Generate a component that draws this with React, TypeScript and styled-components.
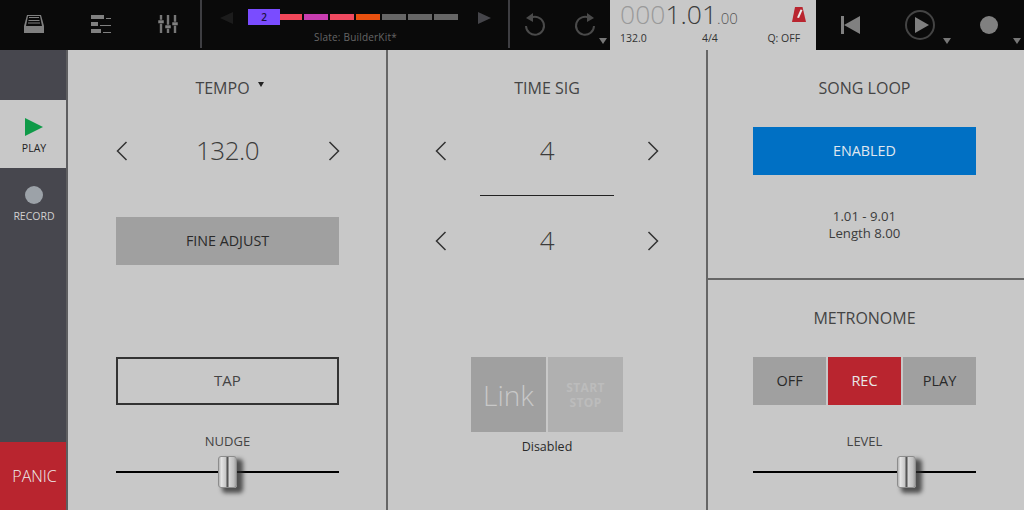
import React from "react";
import styled, { createGlobalStyle } from "styled-components";

const GlobalStyle = createGlobalStyle`
  html, body {
    margin: 0;
    padding: 0;
    background: #c8c8c8;
  }
  * {
    box-sizing: border-box;
  }
`;

const Page = styled.div`
  width: 1024px;
  height: 510px;
  overflow: hidden;
  display: flex;
  flex-direction: column;
  font-family: "Open Sans", "Liberation Sans", sans-serif;
  color: #3c3c3c;
`;

const TopBar = styled.header`
  height: 50px;
  display: flex;
  background: #0a0a0a;
  flex: none;
`;

const IconGroup = styled.div<{ $width: number }>`
  position: relative;
  width: ${p => p.$width}px;
  display: flex;
  align-items: center;
  justify-content: space-around;
  flex: none;
`;

const MainIcons = styled(IconGroup)`
  justify-content: flex-start;
  gap: 47px;
  padding-left: 24px;
`;

const VDivider = styled.div`
  width: 2px;
  height: 48px;
  background: #3e3e42;
  flex: none;
`;

const Sequencer = styled.div`
  position: relative;
  width: 306px;
  flex: none;
  display: flex;
  flex-direction: column;
  align-items: center;
`;

const SeqRow = styled.div`
  height: 30px;
  display: flex;
  align-items: flex-start;
  padding-top: 9px;
  align-self: flex-start;
  margin-left: 18px;
`;

const SeqArrow = styled.div<{ $color: string; $left?: boolean }>`
  width: 0;
  height: 0;
  margin-top: 3px;
  border-top: 6.5px solid transparent;
  border-bottom: 6.5px solid transparent;
  ${p =>
    p.$left
      ? `border-right: 13px solid ${p.$color}; margin-right: 15px;`
      : `border-left: 13px solid ${p.$color}; margin-left: 20px;`}
`;

const SeqBadge = styled.div`
  width: 32px;
  height: 16px;
  background: #7a4cff;
  color: #1a1040;
  font-size: 10px;
  font-weight: 600;
  line-height: 16px;
  text-align: center;
`;

const Segments = styled.div`
  display: flex;
  gap: 2px;
  margin-top: 5px;
`;

const Segment = styled.div<{ $color: string; $first?: boolean }>`
  width: ${p => (p.$first ? 22 : 24)}px;
  height: 6px;
  background: ${p => p.$color};
`;

const SlateName = styled.div`
  font-size: 10px;
  line-height: 14px;
  color: #666;
  letter-spacing: 0.2px;
  margin-left: 1px;
`;

const Counter = styled.div`
  position: relative;
  width: 206px;
  flex: none;
  background: #c8c8c8;
  padding: 0 10px;
  display: flex;
  flex-direction: column;
`;

const CounterValue = styled.div`
  font-size: 26.5px;
  font-weight: 300;
  line-height: 29px;
  height: 31px;
  white-space: nowrap;
  color: #3c3c3c;
`;

const CounterDim = styled.span`
  color: #9a9a9a;
`;

const CounterSmall = styled.span`
  font-size: 15px;
  color: #555;
`;

const CounterInfo = styled.div`
  display: flex;
  font-size: 10.5px;
  line-height: 14px;
  color: #333;
`;

const InfoItem = styled.span<{ $width: number }>`
  width: ${p => p.$width}px;
  white-space: nowrap;
`;

const MetronomeIcon = styled.svg`
  position: absolute;
  left: 182px;
  top: 7px;
`;

const Caret = styled.div`
  position: absolute;
  bottom: 6px;
  right: 3px;
  width: 0;
  height: 0;
  border-left: 4px solid transparent;
  border-right: 4px solid transparent;
  border-top: 6px solid #777;
`;

const Transport = styled.div`
  flex: 1;
  display: flex;
  align-items: center;
`;

const TransportSlot = styled.div<{ $width: number }>`
  position: relative;
  height: 50px;
  width: ${p => p.$width}px;
  display: flex;
  align-items: center;
  justify-content: center;
`;

const PlayCircle = styled.div`
  width: 30px;
  height: 30px;
  border: 2px solid #444;
  border-radius: 50%;
  display: flex;
  align-items: center;
  justify-content: center;
  padding-left: 3px;
`;

const PlayTriangle = styled.div`
  width: 0;
  height: 0;
  border-top: 8px solid transparent;
  border-bottom: 8px solid transparent;
  border-left: 14px solid #808080;
`;

const RecordDot = styled.div`
  width: 18px;
  height: 18px;
  border-radius: 50%;
  background: #808080;
`;

const Body = styled.main`
  flex: 1;
  display: flex;
  min-height: 0;
`;

const Sidebar = styled.nav`
  width: 68px;
  flex: none;
  display: flex;
  flex-direction: column;
  background: #47474e;
  border-right: 2px solid #5e5e60;
  padding-top: 50px;
`;

const SideTab = styled.div<{ $active?: boolean }>`
  height: 68px;
  width: 66px;
  display: flex;
  flex-direction: column;
  align-items: center;
  padding: 17px 0 0 2px;
  background: ${p => (p.$active ? "#c8c8c8" : "transparent")};
  color: ${p => (p.$active ? "#222" : "#d0d0d0")};
  font-size: 10.5px;
  line-height: 14px;
`;

const SideIcon = styled.div`
  height: 20px;
  margin-bottom: 4px;
  display: flex;
  align-items: center;
`;

const GreenPlay = styled.div`
  width: 0;
  height: 0;
  border-top: 9px solid transparent;
  border-bottom: 9px solid transparent;
  border-left: 18px solid #0f9a48;
`;

const GreyDot = styled.div`
  width: 18px;
  height: 18px;
  border-radius: 50%;
  background: #9ca2a8;
`;

const PanicButton = styled.div`
  margin-top: auto;
  height: 68px;
  width: 66px;
  background: #b9252f;
  color: #ededed;
  font-size: 16px;
  font-weight: 300;
  display: flex;
  align-items: center;
  justify-content: center;
  padding-left: 3px;
`;

const Columns = styled.div`
  flex: 1;
  display: grid;
  grid-template-columns: 318px 318px 316px;
`;

const Panel = styled.section<{ $divider?: boolean }>`
  display: flex;
  flex-direction: column;
  align-items: center;
  padding: 28px 47px 0 48px;
  ${p => (p.$divider ? "border-right: 2px solid #666;" : "")}
  width: ${p => (p.$divider ? "320px" : "auto")};
`;

const MiddlePanel = styled(Panel)`
  padding: 28px 48px 0 48px;
  margin-left: 2px;
`;

const RightColumn = styled.div`
  margin-left: 4px;
  display: grid;
  grid-template-rows: 230px 1fr;
`;

const RightPanel = styled.section<{ $top?: boolean }>`
  display: flex;
  flex-direction: column;
  align-items: center;
  padding: 28px 48px 0 45px;
  ${p => (p.$top ? "border-bottom: 2px solid #666;" : "")}
`;

const Title = styled.div<{ $shift?: number }>`
  position: relative;
  height: 20px;
  font-size: 16px;
  line-height: 20px;
  font-weight: 400;
  color: #444;
  text-align: center;
  margin-right: ${p => p.$shift ?? 0}px;
`;

const TitleCaret = styled.span`
  position: absolute;
  left: calc(100% + 8px);
  top: 4px;
  width: 0;
  height: 0;
  border-left: 3px solid transparent;
  border-right: 3px solid transparent;
  border-top: 5px solid #222;
`;

const Stepper = styled.div<{ $top: number }>`
  width: 224px;
  height: 40px;
  margin-top: ${p => p.$top}px;
  display: flex;
  align-items: center;
  justify-content: space-between;
  flex: none;
`;

const StepValue = styled.div`
  font-size: 26px;
  font-weight: 300;
  line-height: 38px;
  padding-bottom: 2px;
  color: #3c3c3c;
  letter-spacing: -0.5px;
`;

const Rule = styled.div`
  width: 134px;
  height: 1px;
  background: #222;
  margin-top: 24px;
  flex: none;
`;

const WideButton = styled.div<{ $top: number; $variant: "fill" | "outline" | "blue" }>`
  width: 223px;
  height: 48px;
  margin-top: ${p => p.$top}px;
  padding-bottom: 2px;
  display: flex;
  align-items: center;
  justify-content: center;
  font-size: ${p => (p.$variant === "outline" ? 15 : 14.3)}px;
  flex: none;
  background: ${p =>
    p.$variant === "fill" ? "#a0a0a0" : p.$variant === "blue" ? "#0070c4" : "transparent"};
  border: ${p => (p.$variant === "outline" ? "2px solid #333" : "none")};
  color: ${p => (p.$variant === "blue" ? "#e0e8f0" : p.$variant === "outline" ? "#444" : "#2a2a2a")};
`;

const SliderLabel = styled.div<{ $top: number }>`
  height: 20px;
  margin-top: ${p => p.$top}px;
  font-size: 13px;
  line-height: 20px;
  color: #444;
`;

const Slider = styled.div`
  position: relative;
  width: 223px;
  height: 32px;
  margin-top: 5px;
  flex: none;
  display: flex;
  align-items: center;
`;

const SliderTrack = styled.div`
  width: 100%;
  height: 2px;
  background: #000;
`;

const SliderThumb = styled.div<{ $left: number }>`
  position: absolute;
  left: ${p => p.$left}px;
  top: 0;
  width: 19px;
  height: 32px;
  border-radius: 3px;
  border: 1px solid #8c8c8c;
  background: linear-gradient(90deg, #b4b4b4 0, #e4e4e4 14%, #c4c4c4 42%, #555 46%, #555 54%, #d8d8d8 58%, #c0c0c0 86%, #a0a0a0 100%);
  box-shadow: 5px 4px 4px 1px rgba(40, 40, 40, 0.75);
`;

const LinkRow = styled.div`
  display: flex;
  gap: 2px;
  margin-top: 96px;
  flex: none;
`;

const LinkTile = styled.div`
  width: 75px;
  height: 75px;
  background: #a0a0a0;
  color: #c8c8c8;
  font-size: 28px;
  font-weight: 300;
  display: flex;
  align-items: center;
  justify-content: center;
`;

const StartTile = styled.div`
  width: 75px;
  height: 75px;
  background: #b0b0b0;
  color: #bcbcbc;
  font-size: 12px;
  font-weight: 700;
  line-height: 15px;
  letter-spacing: 0.4px;
  display: flex;
  align-items: center;
  justify-content: center;
  text-align: center;
`;

const Caption = styled.div`
  margin-top: 6px;
  font-size: 12.5px;
  line-height: 18px;
  color: #2a2a2a;
`;

const LoopInfo = styled.div`
  margin-top: 33px;
  font-size: 13.2px;
  line-height: 17px;
  text-align: center;
  color: #3c3c3c;
`;

const Segmented = styled.div`
  display: flex;
  gap: 2px;
  margin-top: 29px;
`;

const SegButton = styled.div<{ $active?: boolean }>`
  width: 73px;
  height: 48px;
  padding-bottom: 2px;
  background: ${p => (p.$active ? "#b9252f" : "#a0a0a0")};
  color: ${p => (p.$active ? "#e8e8e8" : "#2a2a2a")};
  font-size: 14.5px;
  display: flex;
  align-items: center;
  justify-content: center;
`;

const Chevron = ({ right }: { right?: boolean }) => (
  <svg width="12" height="20" viewBox="0 0 12 20">
    <path
      d={right ? "M1.5 1 L10.5 10 L1.5 19" : "M10.5 1 L1.5 10 L10.5 19"}
      fill="none"
      stroke="#333"
      strokeWidth="1.5"
    />
  </svg>
);

const Fader = ({ left }: { left: number }) => (
  <Slider>
    <SliderTrack />
    <SliderThumb $left={left} />
  </Slider>
);

const DrawerIcon = () => (
  <svg width="20" height="20" viewBox="0 0 20 20">
    <path d="M3 0 H17 L20 11 V18 H0 V11 Z" fill="#808080" />
    <path d="M4 1 H16 L18 11 H2 Z" fill="#0a0a0a" />
    <path d="M5 2.5 H15 M4.5 5.5 H15.5 M4 8 H16" stroke="#808080" strokeWidth="1.2" />
  </svg>
);

const ListIcon = () => (
  <svg width="20" height="20" viewBox="0 0 20 20">
    <path d="M0 0 H13 V4 H0 Z M0 7 H7 V11 H0 Z M0 14 H10 V18 H0 Z" fill="#808080" />
    <path d="M15 3.5 H20 M9 10.5 H20 M12 17.5 H20" stroke="#808080" strokeWidth="1" />
  </svg>
);

const MixerIcon = () => (
  <svg width="20" height="20" viewBox="0 0 20 20">
    <path d="M3 0 V18 M10 0 V18 M17 0 V18" stroke="#777" strokeWidth="2.4" />
    <path d="M0 5 H6 V8.5 H0 Z M7 10 H13 V13.5 H7 Z M14 7 H20 V10.5 H14 Z" fill="#808080" stroke="#0a0a0a" strokeWidth="0.5" />
  </svg>
);

const UndoIcon = ({ flip }: { flip?: boolean }) => (
  <svg width="22" height="24" viewBox="0 0 22 24" style={flip ? { transform: "scaleX(-1)" } : undefined}>
    <path d="M6.5 5 A9 9 0 1 1 2 13" fill="none" stroke="#4a4a4a" strokeWidth="2" />
    <path d="M9 0 V9 L2 5 Z" fill="#4a4a4a" />
  </svg>
);

const SkipBackIcon = () => (
  <svg width="20" height="18" viewBox="0 0 20 18">
    <path d="M0 0 H3 V18 H0 Z M19 0 V18 L3 9 Z" fill="#808080" />
  </svg>
);

const segments = ["#f2475a", "#c83db0", "#f04a60", "#e8500f", "#666", "#666", "#666"];

export default function App() {
  return (
    <Page>
      <GlobalStyle />
      <TopBar>
        <MainIcons $width={200}>
          <DrawerIcon />
          <ListIcon />
          <MixerIcon />
        </MainIcons>
        <VDivider />
        <Sequencer>
          <SeqRow>
            <SeqArrow $left $color="#1c1c1c" />
            <SeqBadge>2</SeqBadge>
            <Segments>
              {segments.map((color, i) => (
                <Segment key={i} $color={color} $first={i === 0} />
              ))}
            </Segments>
            <SeqArrow $color="#45454a" />
          </SeqRow>
          <SlateName>Slate: BuilderKit*</SlateName>
        </Sequencer>
        <VDivider />
        <IconGroup $width={100}>
          <UndoIcon />
          <UndoIcon flip />
          <Caret />
        </IconGroup>
        <Counter>
          <CounterValue>
            <CounterDim>000</CounterDim>1.01<CounterSmall>.00</CounterSmall>
          </CounterValue>
          <CounterInfo>
            <InfoItem $width={85}>132.0</InfoItem>
            <InfoItem $width={68}>4/4</InfoItem>
            <InfoItem $width={40}>Q: OFF</InfoItem>
          </CounterInfo>
          <MetronomeIcon width="14" height="15" viewBox="0 0 14 15">
            <path d="M3 0 H10.5 L14 15 H0 Z" fill="#b9252f" />
            <path d="M5 10.5 L8.5 2.5 L10.5 3 L7 11 Z" fill="#ececec" />
          </MetronomeIcon>
        </Counter>
        <Transport>
          <TransportSlot $width={70}>
            <SkipBackIcon />
          </TransportSlot>
          <TransportSlot $width={68}>
            <PlayCircle>
              <PlayTriangle />
            </PlayCircle>
            <Caret />
          </TransportSlot>
          <TransportSlot $width={70}>
            <RecordDot />
            <Caret />
          </TransportSlot>
        </Transport>
      </TopBar>
      <Body>
        <Sidebar>
          <SideTab $active>
            <SideIcon>
              <GreenPlay />
            </SideIcon>
            PLAY
          </SideTab>
          <SideTab>
            <SideIcon>
              <GreyDot />
            </SideIcon>
            RECORD
          </SideTab>
          <PanicButton>PANIC</PanicButton>
        </Sidebar>
        <Columns>
          <Panel $divider>
            <Title $shift={10}>
              TEMPO
              <TitleCaret />
            </Title>
            <Stepper $top={33}>
              <Chevron />
              <StepValue>132.0</StepValue>
              <Chevron right />
            </Stepper>
            <WideButton $top={46} $variant="fill">
              FINE ADJUST
            </WideButton>
            <WideButton $top={92} $variant="outline">
              TAP
            </WideButton>
            <SliderLabel $top={26}>NUDGE</SliderLabel>
            <Fader left={102} />
          </Panel>
          <MiddlePanel $divider>
            <Title>TIME SIG</Title>
            <Stepper $top={33}>
              <Chevron />
              <StepValue>4</StepValue>
              <Chevron right />
            </Stepper>
            <Rule />
            <Stepper $top={25}>
              <Chevron />
              <StepValue>4</StepValue>
              <Chevron right />
            </Stepper>
            <LinkRow>
              <LinkTile>Link</LinkTile>
              <StartTile>
                START
                <br />
                STOP
              </StartTile>
            </LinkRow>
            <Caption>Disabled</Caption>
          </MiddlePanel>
          <RightColumn>
            <RightPanel $top>
              <Title>SONG LOOP</Title>
              <WideButton $top={29} $variant="blue">
                ENABLED
              </WideButton>
              <LoopInfo>
                1.01 - 9.01
                <br />
                Length 8.00
              </LoopInfo>
            </RightPanel>
            <RightPanel>
              <Title>METRONOME</Title>
              <Segmented>
                <SegButton>OFF</SegButton>
                <SegButton $active>REC</SegButton>
                <SegButton>PLAY</SegButton>
              </Segmented>
              <SliderLabel $top={26}>LEVEL</SliderLabel>
              <Fader left={144} />
            </RightPanel>
          </RightColumn>
        </Columns>
      </Body>
    </Page>
  );
}
